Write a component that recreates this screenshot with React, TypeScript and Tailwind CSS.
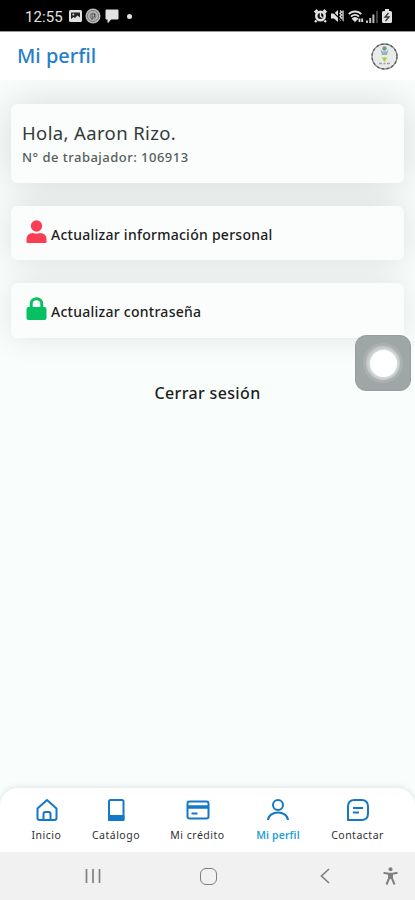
import type { ReactNode } from 'react';

const BLUE = '#1478c8';

function StatusBar() {
  return (
    <div className="h-[31px] bg-black flex items-center justify-between pl-[25px] pr-[23px] pt-[1px] text-[#e2e2e2]">
      <div className="flex items-center">
        <span className="w-[44px] font-['Roboto',sans-serif] text-[15px] leading-none tracking-[0.1px] relative top-px">12:55</span>
        <svg width="13" height="12" viewBox="0 0 13 12">
          <rect width="13" height="12" rx="1.5" fill="currentColor" />
          <path d="M2 2.5h9v5L8.5 5.5 6 8 4.5 7 2 9z" fill="#222" />
          <circle cx="4.3" cy="4.4" r="1" fill="#ddd" />
        </svg>
        <svg width="16" height="16" viewBox="0 0 16 16" className="ml-[3px]" fill="none">
          <circle cx="8" cy="8" r="7.5" fill="#b9b9b9" />
          <circle cx="8" cy="8" r="5.5" stroke="#777" />
          <circle cx="8" cy="8" r="3" stroke="#777" />
          <path d="M7 12V6h2.5v3H7" stroke="#555" />
        </svg>
        <svg width="14" height="14" viewBox="0 0 14 14" className="ml-[4px]">
          <path d="M1 1h12v9H6l-3 3.5V10H1z" fill="currentColor" stroke="currentColor" strokeLinejoin="round" />
        </svg>
        <span className="ml-[8px] size-[5px] rounded-full bg-[#e2e2e2]" />
      </div>
      <div className="flex items-center gap-[4px]">
        <svg width="13" height="14" viewBox="0 0 13 14">
          <circle cx="6.5" cy="7" r="5.5" fill="currentColor" />
          <path d="M.8 3.5L3.5 1M12.2 3.5L9.5 1M2.5 11.5L1 13M10.5 11.5L12 13" stroke="currentColor" strokeWidth="2.4" />
          <circle cx="6.5" cy="7" r="3" fill="#111" />
          <path d="M6.5 3.5v3.8l2 1.5" stroke="currentColor" strokeWidth="1.4" fill="none" />
        </svg>
        <svg width="13" height="14" viewBox="0 0 13 14">
          <path d="M0 4.5h3l4-3.500v12l-4-3.500H0z" fill="currentColor" />
          <path d="M9 1.500l1.500 1.500L9 4.500 10.500 6 9 7.500 10.500 9 9 10.500 10.500 12M12 1.500v11" stroke="currentColor" strokeWidth="1.300" fill="none" />
          <path d="M0 1l12 12" stroke="#000" strokeWidth="1.100" />
        </svg>
        <svg width="16" height="13" viewBox="0 0 16 13" fill="none" stroke="currentColor" strokeWidth="1.900">
          <path d="M.8 4.200C4 .5 10 .5 13.200 4.200M3 6.700c2.200-2.400 5.800-2.400 8 0" />
          <path d="M5 8.700c1.200-1 2.800-1 4 0l-2 2z" fill="currentColor" />
          <path d="M11.500 12V8.500M14.200 8.500V12" strokeWidth="1.800" />
        </svg>
        <svg width="12" height="13" viewBox="0 0 12 13" className="-ml-[2px]">
          <path d="M0 10.500h2V13H0zM3.200 8h2v5h-2zM6.400 4.500h2V13h-2z" fill="#bbb" />
          <path d="M10.200 1h1.500v12h-1.500z" fill="#555" />
        </svg>
        <svg width="10" height="14" viewBox="0 0 10 14">
          <path d="M3 0h4v2h1.500Q10 2 10 3.500v9Q10 14 8.500 14h-7Q0 14 0 12.500v-9Q0 2 1.500 2H3z" fill="currentColor" />
          <path d="M6.500 4L3 8h4l-3.500 4" stroke="#333" strokeWidth="1.300" fill="none" />
        </svg>
      </div>
    </div>
  );
}

function Avatar() {
  return (
    <svg width="27" height="27" viewBox="0 0 27 27">
      <circle cx="13.5" cy="13.5" r="12.5" fill="#e9ebea" stroke="#858787" strokeWidth="1.3" />
      <circle cx="13.5" cy="13.5" r="12.5" fill="none" stroke="#5c5e5e" strokeWidth="1.3" strokeDasharray="2.5 2.5" />
      <circle cx="13.5" cy="5.5" r="2.2" fill="#6f9c98" />
      <path d="M9.5 6l1.500 6h5l1.500-6-2 2.500h-4z" fill="#8fb5b5" />
      <path d="M10.800 14.500h5.400L13.500 19z" fill="#b7c83a" />
      <path d="M8 20.500h3M12.500 20.500h2M16 20.500h3" stroke="#98a4a0" strokeWidth="1.500" />
    </svg>
  );
}

function ActionCard({ icon, label }: { icon: ReactNode; label: string }) {
  return (
    <button className="w-full h-full rounded-[7px] bg-[#fafdfc] flex items-start pl-[15px] text-left">
      <span className="mt-[14px]">{icon}</span>
      <span className="ml-[4px] mt-[19px] text-[14px] leading-[20px] font-medium tracking-[0.26px] whitespace-nowrap text-[#1d2020]">{label}</span>
    </button>
  );
}

interface TabProps {
  label: string;
  width: string;
  active?: boolean;
  children: ReactNode;
}

function Tab({ label, width, active, children }: TabProps) {
  return (
    <button className={`${width} flex flex-col items-center`}>
      <svg width="24" height="24" viewBox="0 0 24 24" fill="none" stroke={BLUE} strokeWidth="2" strokeLinejoin="round">
        {children}
      </svg>
      <span className={`mt-[6px] text-[10.5px] leading-[14px] whitespace-nowrap ${active ? 'font-semibold text-[#2a9fd6] tracking-[0.1px]' : 'text-[#303030] tracking-[0.5px]'}`}>
        {label}
      </span>
    </button>
  );
}

export default function App() {
  return (
    <div className="w-[415px] h-[900px] overflow-hidden flex flex-col bg-[#f9fefd] font-['Noto_Sans','Open_Sans',sans-serif]">
      <StatusBar />

      <header className="relative z-10 h-[49px] shrink-0 bg-white flex items-center justify-between px-[17px] border-t border-[#999]">
        <h1 className="text-[20px] leading-[26px] font-medium text-[#2580c8]">Mi perfil</h1>
        <Avatar />
      </header>

      <main className="relative flex-1 px-[11px] pt-[24px]">
        {/* Each card sits above its neighbours' shadows */}
        <section className="flex flex-col">
          <div className="h-[79px] rounded-[7px] shadow-[0_0_40px_rgba(0,0,0,0.15)]">
            <div className="relative z-[1] h-full rounded-[7px] bg-[#fafdfc] pl-[11px] pt-[16px] text-[#343a3a]">
              <p className="text-[18.5px] leading-[25px] tracking-[0.37px]">Hola, Aaron Rizo.</p>
              <p className="text-[13px] leading-[18px] mt-[3px] font-medium tracking-[0.48px] text-[#565d5d]">N° de trabajador: 106913</p>
            </div>
          </div>

          <div className="mt-[23px] h-[54px] rounded-[7px] shadow-[0_0_36px_rgba(0,0,0,0.13)]">
            <div className="relative z-[1] h-full">
              <ActionCard
                label="Actualizar información personal"
                icon={
                  <svg width="21" height="24" viewBox="0 0 21 24" fill="#fa3e54">
                    <circle cx="10.5" cy="6" r="5.7" />
                    <path d="M1.5 23Q.5 23 .5 22v-2.500Q.5 13 7 13q3.500 1 7 0 6.500 0 6.500 6.500V22q0 1-1 1z" />
                  </svg>
                }
              />
            </div>
          </div>

          <div className="mt-[23px] h-[55px] rounded-[7px] shadow-[0_0_30px_rgba(0,0,0,0.1)]">
            <div className="relative z-[1] h-full">
              <ActionCard
                label="Actualizar contraseña"
                icon={
                  <svg width="21" height="24" viewBox="0 0 21 24">
                    <path d="M5.2 12V6.700a5.300 5 0 0 1 10.600 0V12" fill="none" stroke="#08c064" strokeWidth="3" />
                    <rect x=".5" y="10" width="20" height="13" rx="2" fill="#08c064" />
                  </svg>
                }
              />
            </div>
          </div>
        </section>

        <div className="flex justify-center">
          <button className="mt-[43px] text-[16px] leading-[24px] font-medium tracking-[0.35px] text-[#1c1e1e]">Cerrar sesión</button>
        </div>

        {/* Floating assistive button */}
        <div className="absolute z-20 left-[355px] top-[255px] size-[56px] rounded-[11px] bg-[#9ea6a6] border border-[#959d9d] flex items-center justify-center">
          <div className="size-[40px] rounded-full bg-[#abb1b1] flex items-center justify-center">
            <div className="size-[34px] rounded-full bg-[#c1c6c6] flex items-center justify-center">
              <div className="size-[27px] rounded-full bg-white shadow-[0_0_3px_1px_#e3e6e6]" />
            </div>
          </div>
        </div>
      </main>

      <nav className="h-[64px] shrink-0 rounded-t-[18px] bg-white shadow-[0_-1px_6px_rgba(0,60,50,0.13)] flex items-start pt-[10px] pl-[16px]">
        <Tab label="Inicio" width="w-[61px]">
          <path d="M2.500 10.500L12 2l9.500 8.500V20q0 2-2 2h-15q-2 0-2-2z" />
          <path d="M8.500 22v-6q0-2 2-2h3q2 0 2 2v6" />
        </Tab>
        <Tab label="Catálogo" width="w-[78px]">
          <rect x="5" y="2" width="14.5" height="20" rx="1.5" />
          <path d="M5 18h14.500v4H5z" fill={BLUE} />
        </Tab>
        <Tab label="Mi crédito" width="w-[85px]">
          <rect x="1.5" y="3.5" width="21" height="17" rx="2" />
          <path d="M2 9h20" strokeWidth="3.5" />
          <path d="M5.500 15.500h6" />
        </Tab>
        <Tab label="Mi perfil" width="w-[76px]" active>
          <circle cx="12" cy="7" r="5" />
          <path d="M2 22c1-10 19-10 20 0" />
        </Tab>
        <Tab label="Contactar" width="w-[83px]">
          <path d="M2 22V8.500Q2 2 8.500 2h7Q22 2 22 8.500v7Q22 22 15.500 22z" />
          <path d="M7 10h10M7 14.500h6" />
        </Tab>
      </nav>

      <footer className="h-[48px] shrink-0 bg-[#f1f1f1] flex items-center text-[#808080]">
        <svg width="16" height="16" viewBox="0 0 16 16" className="ml-[85px]" stroke="currentColor" strokeWidth="1.7">
          <path d="M1.500 1v14M8 1v14M14.500 1v14" />
        </svg>
        <div className="ml-[99px] size-[17px] rounded-[6px] border-[1.5px] border-[#808080]" />
        <svg width="10" height="16" viewBox="0 0 10 16" className="ml-[103px]" fill="none" stroke="currentColor" strokeWidth="1.7">
          <path d="M9 1L1.500 8 9 15" />
        </svg>
        <svg width="15" height="18" viewBox="0 0 15 18" className="ml-[53px]" fill="none" stroke="currentColor" strokeWidth="2">
          <circle cx="7.5" cy="2.2" r="2" fill="currentColor" stroke="none" />
          <path d="M.5 5.800l5 1h4l5-1M6 7v4.500L3.500 17.500M9 7v4.500l2.500 6M7.500 7v5" />
        </svg>
      </footer>
    </div>
  );
}
